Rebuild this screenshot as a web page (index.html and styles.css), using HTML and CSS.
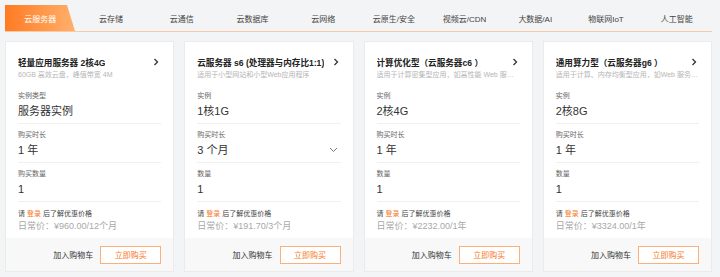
FILE: index.html
```html
<!DOCTYPE html>
<html lang="zh-CN">
<head>
    <meta charset="UTF-8">
    <meta name="viewport" content="width=device-width, initial-scale=1.0">
    <title>云产品</title>
    <link rel="stylesheet" href="styles.css">
</head>
<body>
    <div class="page">
        <ul class="tabs">
            <li class="tab active">云服务器</li>
            <li class="tab">云存储</li>
            <li class="tab">云通信</li>
            <li class="tab">云数据库</li>
            <li class="tab">云网络</li>
            <li class="tab">云原生/安全</li>
            <li class="tab">视频云/CDN</li>
            <li class="tab">大数据/AI</li>
            <li class="tab">物联网IoT</li>
            <li class="tab">人工智能</li>
        </ul>

        <div class="cards">
            <!-- 轻量应用服务器 -->
            <div class="card">
                <div class="card-body">
                    <div class="title-row">
                        <span class="title">轻量应用服务器 2核4G</span>
                        <svg class="arrow" width="6" height="8" viewBox="0 0 6 8"><polyline points="1.5,1 4.5,4 1.5,7" fill="none" stroke="#333" stroke-width="1.3"/></svg>
                    </div>
                    <div class="desc">60GB 高效云盘，峰值带宽 4M</div>
                    <div class="field"><div class="label">实例类型</div><div class="value">服务器实例</div></div>
                    <div class="field"><div class="label">购买时长</div><div class="value">1 年</div></div>
                    <div class="field"><div class="label">购买数量</div><div class="value">1</div></div>
                    <div class="price">
                        <div class="login">请 <a href="#">登录</a> 后了解优惠价格</div>
                        <div class="normal">日常价：¥960.00/12个月</div>
                    </div>
                </div>
                <div class="card-foot">
                    <span class="cart">加入购物车</span>
                    <button class="buy">立即购买</button>
                </div>
            </div>

            <!-- 云服务器 s6 -->
            <div class="card">
                <div class="card-body">
                    <div class="title-row">
                        <span class="title">云服务器 s6 (处理器与内存比1:1)</span>
                        <svg class="arrow" width="6" height="8" viewBox="0 0 6 8"><polyline points="1.5,1 4.5,4 1.5,7" fill="none" stroke="#333" stroke-width="1.3"/></svg>
                    </div>
                    <div class="desc">适用于小型网站和小型Web应用程序</div>
                    <div class="field"><div class="label">实例</div><div class="value">1核1G</div></div>
                    <div class="field">
                        <div class="label">购买时长</div>
                        <div class="value select">
                            <span>3 个月</span>
                            <svg width="9" height="6" viewBox="0 0 9 6"><polyline points="1,1 4.5,4.5 8,1" fill="none" stroke="#777" stroke-width="1"/></svg>
                        </div>
                    </div>
                    <div class="field"><div class="label">数量</div><div class="value">1</div></div>
                    <div class="price">
                        <div class="login">请 <a href="#">登录</a> 后了解优惠价格</div>
                        <div class="normal">日常价：¥191.70/3个月</div>
                    </div>
                </div>
                <div class="card-foot">
                    <span class="cart">加入购物车</span>
                    <button class="buy">立即购买</button>
                </div>
            </div>

            <!-- 计算优化型 c6 -->
            <div class="card">
                <div class="card-body">
                    <div class="title-row">
                        <span class="title">计算优化型（云服务器c6 ）</span>
                        <svg class="arrow" width="6" height="8" viewBox="0 0 6 8"><polyline points="1.5,1 4.5,4 1.5,7" fill="none" stroke="#333" stroke-width="1.3"/></svg>
                    </div>
                    <div class="desc">适用于计算密集型应用，如高性能 Web 服务器、批处理</div>
                    <div class="field"><div class="label">实例</div><div class="value">2核4G</div></div>
                    <div class="field"><div class="label">购买时长</div><div class="value">1 年</div></div>
                    <div class="field"><div class="label">数量</div><div class="value">1</div></div>
                    <div class="price">
                        <div class="login">请 <a href="#">登录</a> 后了解优惠价格</div>
                        <div class="normal">日常价：¥2232.00/1年</div>
                    </div>
                </div>
                <div class="card-foot">
                    <span class="cart">加入购物车</span>
                    <button class="buy">立即购买</button>
                </div>
            </div>

            <!-- 通用算力型 g6 -->
            <div class="card">
                <div class="card-body">
                    <div class="title-row">
                        <span class="title">通用算力型（云服务器g6 ）</span>
                        <svg class="arrow" width="6" height="8" viewBox="0 0 6 8"><polyline points="1.5,1 4.5,4 1.5,7" fill="none" stroke="#333" stroke-width="1.3"/></svg>
                    </div>
                    <div class="desc">适用于计算、内存均衡型应用，如Web 服务器、中小型数据库</div>
                    <div class="field"><div class="label">实例</div><div class="value">2核8G</div></div>
                    <div class="field"><div class="label">购买时长</div><div class="value">1 年</div></div>
                    <div class="field"><div class="label">数量</div><div class="value">1</div></div>
                    <div class="price">
                        <div class="login">请 <a href="#">登录</a> 后了解优惠价格</div>
                        <div class="normal">日常价：¥3324.00/1年</div>
                    </div>
                </div>
                <div class="card-foot">
                    <span class="cart">加入购物车</span>
                    <button class="buy">立即购买</button>
                </div>
            </div>
        </div>
    </div>
</body>
</html>
```

FILE: styles.css
```css
body { margin: 0; background: #f3f4f5; font-family: "Liberation Sans", "Noto Sans CJK SC", sans-serif; color: #333; }
.page { width: 707px; padding: 5px 8px 0 5px; }

.tabs { display: flex; list-style: none; margin: 0; padding: 0; height: 26px; border-bottom: 1px solid #fbc9a2; }
.tab { flex: 1; display: flex; align-items: center; justify-content: center; font-size: 8px; color: #444; }
.tab.active { color: #fff; background: linear-gradient(90deg, #ff7b22, #ffb16e); clip-path: polygon(0 0, 62px 0, 70px 100%, 0 100%); }

.cards { display: grid; grid-template-columns: repeat(4, minmax(0, 1fr)); gap: 10px; margin-top: 9px; }
.card { min-width: 0; background: #fff; border: 1px solid #ebebeb; }
.card-body { padding: 13px 12px 5px; }

.title-row { display: flex; align-items: center; justify-content: space-between; gap: 4px; height: 14px; }
.title { font-size: 8.6px; font-weight: bold; color: #222; white-space: nowrap; overflow: hidden; }
.arrow { margin-right: 2px; flex-shrink: 0; }
.desc { font-size: 7px; line-height: 12px; color: #b5b5b5; white-space: nowrap; overflow: hidden; text-overflow: ellipsis; margin-bottom: 4px; }

.field { padding: 5px 0 3px; border-bottom: 1px solid #f0f0f0; }
.label { font-size: 7px; line-height: 12px; color: #666; }
.value { font-size: 11px; line-height: 18px; color: #333; }
.value.select { display: flex; align-items: center; justify-content: space-between; padding-right: 3px; }

.price { padding-top: 6px; }
.login { font-size: 7px; line-height: 11px; color: #444; }
.login a { color: #f5781e; text-decoration: none; }
.normal { font-size: 9px; line-height: 14px; color: #a8a8a8; }

.card-foot { display: flex; align-items: center; justify-content: flex-end; gap: 7px; height: 33px; padding: 0 12px; background: #f8f8f9; }
.cart { font-size: 8px; color: #333; white-space: nowrap; }
.buy { width: 61px; height: 18px; padding: 0; border: 1px solid #f8b07c; background: #fff; color: #f5781e; font-size: 8px; font-family: inherit; cursor: pointer; }
```
